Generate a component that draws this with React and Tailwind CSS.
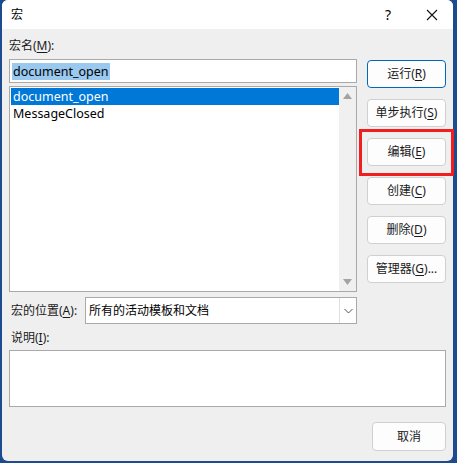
import React from "react";

const F = { fontFamily: '"Noto Sans", "Noto Sans CJK SC", sans-serif' };

function Btn({ children, primary, w = "w-[79px] h-[28px]" }) {
  return (
    <div
      className={
        "flex items-center justify-center rounded-[4px] border bg-[#fdfdfd] text-[12px] text-[#1a1a1a] " +
        (primary ? "border-[#0067c0]" : "border-[#d0d0d0]") +
        " " +
        w
      }
    >
      {children}
    </div>
  );
}

const U = ({ children }) => <span className="underline underline-offset-2">{children}</span>;

export default function App() {
  return (
    <div className="relative h-[463px] w-[457px] overflow-hidden bg-[#1d4b8f]" style={F}>
      <div className="ml-[2px] flex h-[461px] w-[451px] flex-col overflow-hidden rounded-[6px] bg-[#efefef]">
        {/* title bar */}
        <div className="flex h-[29px] shrink-0 items-center bg-white text-[12px] text-black">
          <span className="pl-[9px]">宏</span>
          <span className="ml-auto w-[20px] text-center text-[14px]">?</span>
          <span className="ml-[24px] mr-[11px] flex w-[20px] items-center justify-center">
            <svg width="12" height="12" viewBox="0 0 12 12">
              <path d="M1 1 L11 11 M11 1 L1 11" stroke="#111" strokeWidth="1.1" fill="none" />
            </svg>
          </span>
        </div>
        {/* body */}
        <div className="flex flex-col pl-[7px] text-[12px] text-[#1a1a1a]">
          <div className="flex">
            <div className="flex w-[348px] flex-col">
              <div className="mt-[9px] h-[16px] leading-[16px]">
                宏名(<U>M</U>):
              </div>
              <div className="mt-[5px] flex h-[24px] items-center border border-[#a9a9a9] bg-white pl-[2px]">
                <span className="bg-[#99c9ef] px-[1px] text-[12.5px] leading-[17px] text-black">document_open</span>
              </div>
              <div className="mt-[3px] flex h-[206px] border border-[#a9a9a9] bg-white">
                <div className="flex flex-1 flex-col pl-[1px] pt-[1px] text-[12.5px] leading-[17px]">
                  <div className="bg-[#0078d7] pl-[2px] text-white">document_open</div>
                  <div className="pl-[2px] text-black">MessageClosed</div>
                </div>
                <div className="flex w-[17px] flex-col items-center justify-between bg-[#f0f0f0] py-[6px]">
                  <svg width="9" height="6" viewBox="0 0 9 6">
                    <path d="M0 6 L4.5 0 L9 6 Z" fill="#a3a3a3" />
                  </svg>
                  <svg width="9" height="6" viewBox="0 0 9 6">
                    <path d="M0 0 L9 0 L4.5 6 Z" fill="#a3a3a3" />
                  </svg>
                </div>
              </div>
              <div className="mt-[5px] flex items-center">
                <span className="w-[76px] pl-[2px]">
                  宏的位置(<U>A</U>):
                </span>
                <div className="flex h-[27px] flex-1 items-center border border-[#a9a9a9] bg-white">
                  <span className="flex-1 pl-[3px] text-black">所有的活动模板和文档</span>
                  <div className="flex h-full w-[17px] items-center justify-center border-l border-[#e0e0e0]">
                    <svg width="9" height="6" viewBox="0 0 9 6">
                      <path d="M0.5 1 L4.5 5 L8.5 1" stroke="#555" strokeWidth="1" fill="none" />
                    </svg>
                  </div>
                </div>
              </div>
            </div>
            <div className="ml-[10px] flex flex-col gap-[11px] pt-[31px]">
              <Btn primary>
                运行(<U>R</U>)
              </Btn>
              <Btn>
                单步执行(<U>S</U>)
              </Btn>
              <Btn>
                编辑(<U>E</U>)
              </Btn>
              <Btn>
                创建(<U>C</U>)
              </Btn>
              <Btn>
                删除(<U>D</U>)
              </Btn>
              <Btn>
                管理器(<U>G</U>)...
              </Btn>
            </div>
          </div>
          <div className="mt-[6px] h-[16px] pl-[2px] leading-[16px]">
            说明(<U>I</U>):
          </div>
          <div className="mt-[4px] h-[57px] w-[437px] border border-[#a9a9a9] bg-white" />
          <div className="mt-[15px] flex w-[437px] justify-end">
            <Btn w="w-[74px] h-[29px]">取消</Btn>
          </div>
        </div>
      </div>
      <div className="absolute left-[359px] top-[129px] h-[47px] w-[95px] border-[3px] border-[#f01e1e]" />
    </div>
  );
}
